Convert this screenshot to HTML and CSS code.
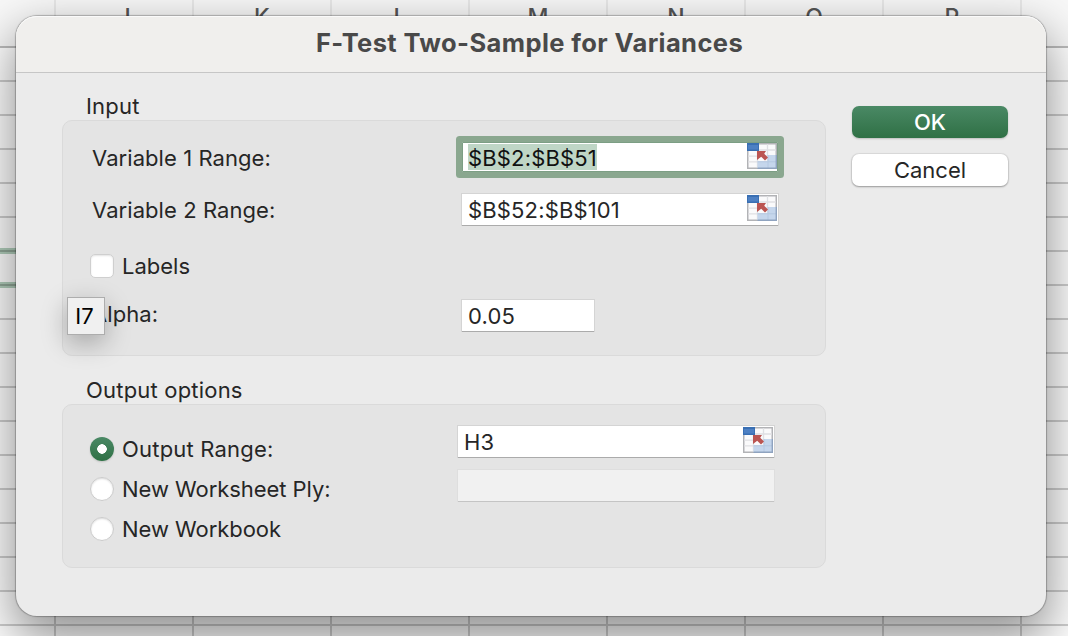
FILE: index.html
```html
<!DOCTYPE html>
<html lang="en">
<head>
<meta charset="utf-8">
<title>F-Test Two-Sample for Variances</title>
<link rel="stylesheet" href="styles.css">
</head>
<body>
<svg class="defs" width="0" height="0" aria-hidden="true">
  <symbol id="picker" viewBox="0 0 30 26">
    <rect x="0" y="0" width="30" height="26" fill="#b2b3b6"/>
    <rect x="1.500" y="1.500" width="27" height="23" fill="#fafafb"/>
    <path d="M1 13.200h28M1 18.800h28M11 7h18M10.500 1v24M20.500 1v24" stroke="#dfe0e4" stroke-width="1.300" fill="none"/>
    <path d="M21 12h8v13H10.500v-6.500H21z" fill="#c5d6ec"/>
    <path d="M21 12v13M10.500 18.800H29" stroke="#b4c8e2" stroke-width="1" fill="none"/>
    <path d="M29.300 12v13.300H10.500" stroke="#8fa3bf" stroke-width="1.400" fill="none"/>
    <rect x="0" y="0" width="12" height="8" fill="#396fb3"/>
    <rect x="1" y="2" width="10" height="4.500" fill="#4d80c3"/>
    <path d="M10 8h9l-1.800 2.800 3.800 3.700-3 3-3.800-3.700-4.200 3.200z" fill="#bb5552"/>
  </symbol>
</svg>
<div class="screen">
  <div class="sheet">
    <div class="columns">
      <span class="stub"></span><span>J</span><span>K</span><span>L</span><span>M</span><span>N</span><span>O</span><span>P</span><span></span>
    </div>
    <div class="cells"></div>
    <div class="selection"></div>
  </div>
  <div class="dialog">
    <div class="titlebar">F-Test Two-Sample for Variances</div>
    <div class="content">
      <div class="groups">
        <div class="legend">Input</div>
        <div class="group input-group">
          <div class="row range-row">
            <span class="label">Variable 1 Range:</span>
            <div class="field focused"><span class="selected">$B$2:$B$51</span><svg class="picker"><use href="#picker"/></svg></div>
          </div>
          <div class="row range-row">
            <span class="label">Variable 2 Range:</span>
            <div class="field"><span>$B$52:$B$101</span><svg class="picker"><use href="#picker"/></svg></div>
          </div>
          <div class="row labels-row"><span class="checkbox"></span><span>Labels</span></div>
          <div class="row alpha-row">
            <span class="label">Alpha:</span>
            <div class="field small"><span>0.05</span></div>
            <span class="tooltip">I7</span>
          </div>
        </div>
        <div class="legend second">Output options</div>
        <div class="group output-group">
          <div class="choices">
            <div class="choice"><span class="radio on"></span><span class="wide">Output Range:</span></div>
            <div class="choice"><span class="radio"></span><span>New Worksheet Ply:</span></div>
            <div class="choice"><span class="radio"></span><span>New Workbook</span></div>
          </div>
          <div class="outputs">
            <div class="field"><span>H3</span><svg class="picker"><use href="#picker"/></svg></div>
            <div class="field disabled"></div>
          </div>
        </div>
      </div>
      <div class="buttons">
        <div class="button primary">OK</div>
        <div class="button">Cancel</div>
      </div>
    </div>
  </div>
</div>
</body>
</html>
```
FILE: styles.css
```css
* { box-sizing: border-box; }

body {
  margin: 0;
  font-family: Inter, "Liberation Sans", sans-serif;
  font-size: 22px;
  color: #262626;
}

.defs { position: absolute; }

.screen {
  position: relative;
  width: 1068px;
  height: 636px;
  padding: 16px 22px 20px 16px;
  overflow: hidden;
}

.sheet {
  position: absolute;
  inset: 0;
  background: #fff;
}

.columns {
  display: grid;
  grid-template-columns: 56px repeat(8, 138px);
  height: 48px;
  background: #f8f8f8;
  border-bottom: 2px solid #bcbcbc;
}

.columns span {
  border-right: 2px solid #e8e8e8;
  text-align: center;
  font-size: 23px;
  font-weight: 500;
  line-height: 35px;
  color: #555;
}

.cells {
  height: 588px;
  background:
    repeating-linear-gradient(to bottom, transparent 0 32px, #cfcfcf 32px 34px),
    repeating-linear-gradient(to right, transparent 0 54px, #cfcfcf 54px 56px, transparent 56px 138px);
}

.selection {
  position: absolute;
  left: 0;
  top: 248px;
  width: 40px;
  height: 40px;
  background: linear-gradient(
    #b3d0bd 0 2px, #91a898 2px 4px, #b3d0bd 4px 6px,
    transparent 6px 34px,
    #b3d0bd 34px 36px, #91a898 36px 38px, #b3d0bd 38px 40px);
}

.dialog {
  position: relative;
  height: 600px;
  border-radius: 21px;
  background: #ebebeb;
  box-shadow: 0 0 1px 1px rgba(0, 0, 0, .25), 0 20px 50px 4px rgba(0, 0, 0, .43);
}

.titlebar {
  height: 57px;
  padding-right: 3px;
  border-radius: 21px 21px 0 0;
  border-bottom: 1px solid #c6c6c6;
  background: #f0efed;
  box-shadow: inset 0 1px 0 #fafafa;
  line-height: 54px;
  text-align: center;
  font-size: 25.500px;
  font-weight: 700;
  letter-spacing: .4px;
  color: #494949;
}

.content {
  display: flex;
  gap: 26px;
  padding-left: 46px;
}

.groups { width: 764px; }

.legend {
  height: 47px;
  padding: 19px 0 0 24px;
  line-height: 28px;
  letter-spacing: .2px;
}

.legend.second {
  height: 48px;
  padding-top: 20px;
}

.group {
  border: 1px solid #dadada;
  border-radius: 10px;
  background: #e4e4e4;
}

.input-group { height: 236px; }

.row {
  display: flex;
  align-items: center;
}

.range-row {
  height: 52px;
  padding: 1px 0 0 29px;
}

.range-row:first-child {
  height: 62px;
  padding-top: 11px;
}

.label {
  width: 370px;
  letter-spacing: .07px;
}

.field {
  display: flex;
  justify-content: space-between;
  align-items: center;
  width: 316px;
  height: 31px;
  padding-left: 6px;
  background: #fff;
  box-shadow: 0 1px 0 0 #ababab, 0 0 0 1px #d4d4d4;
  letter-spacing: .15px;
}

.field.focused {
  height: 30px;
  margin-bottom: 1px;
  border-radius: 1px;
  box-shadow: inset 0 0 0 1px #7c9e84, 0 0 0 6px #8aa78f;
}

.field.small {
  position: relative;
  top: 1px;
  width: 132px;
  padding-top: 2px;
}

.picker {
  width: 30px;
  height: 26px;
  margin: 0 1px 4px 0;
}

.focused .picker { margin-bottom: 3px; }

.selected {
  height: 26px;
  line-height: 28px;
  background: #bfd6c6;
  color: #111;
}

.labels-row {
  gap: 8px;
  height: 60px;
  padding: 2px 0 0 27px;
}

.checkbox {
  width: 24px;
  height: 24px;
  border: 1px solid #cfcfcf;
  border-radius: 5px;
  background: #fff;
  box-shadow: inset 0 1px 2px #e3e3e3;
}

.alpha-row {
  position: relative;
  height: 36px;
  padding: 2px 0 0 29px;
}

.tooltip {
  position: absolute;
  left: 4px;
  top: 2px;
  width: 38px;
  height: 38px;
  border: 1px solid #adadad;
  background: #f0f0f0;
  box-shadow: 0 8px 26px rgba(0, 0, 0, .28);
  line-height: 37px;
  text-align: center;
  text-indent: -3px;
  color: #000;
}

.output-group {
  display: flex;
  height: 164px;
  padding-left: 27px;
}

.choices {
  width: 368px;
  padding-top: 24px;
}

.choice {
  display: flex;
  align-items: center;
  gap: 8px;
  height: 40px;
  letter-spacing: -.05px;
}

.wide { letter-spacing: .2px; }

.radio {
  width: 24px;
  height: 24px;
  border: 1px solid #cbcbcb;
  border-radius: 50%;
  background: #fff;
  box-shadow: inset 0 1px 2px #ddd;
}

.radio.on {
  border: 0;
  background: radial-gradient(circle, #fff 0 4.500px, transparent 5px), linear-gradient(#4a8965, #2f7045);
  box-shadow: 0 1px 2px rgba(0, 0, 0, .15);
}

.outputs {
  display: grid;
  align-content: start;
  gap: 13px;
  padding-top: 21px;
}

.field.disabled {
  background: #f1f1f1;
  box-shadow: 0 1px 0 0 #c4c4c4, 0 0 0 1px #dedede;
}

.buttons {
  display: grid;
  align-content: start;
  gap: 16px;
  width: 156px;
  padding-top: 33px;
}

.button {
  height: 32px;
  border-radius: 7px;
  background: #fff;
  box-shadow: 0 0 1px 1px rgba(0, 0, 0, .07), 0 1px 2px rgba(0, 0, 0, .3);
  line-height: 32px;
  text-align: center;
}

.button.primary {
  background: linear-gradient(#4a8965, #2f7045);
  box-shadow: 0 1px 2px rgba(0, 0, 0, .2);
  color: #fff;
  font-weight: 500;
}
```
